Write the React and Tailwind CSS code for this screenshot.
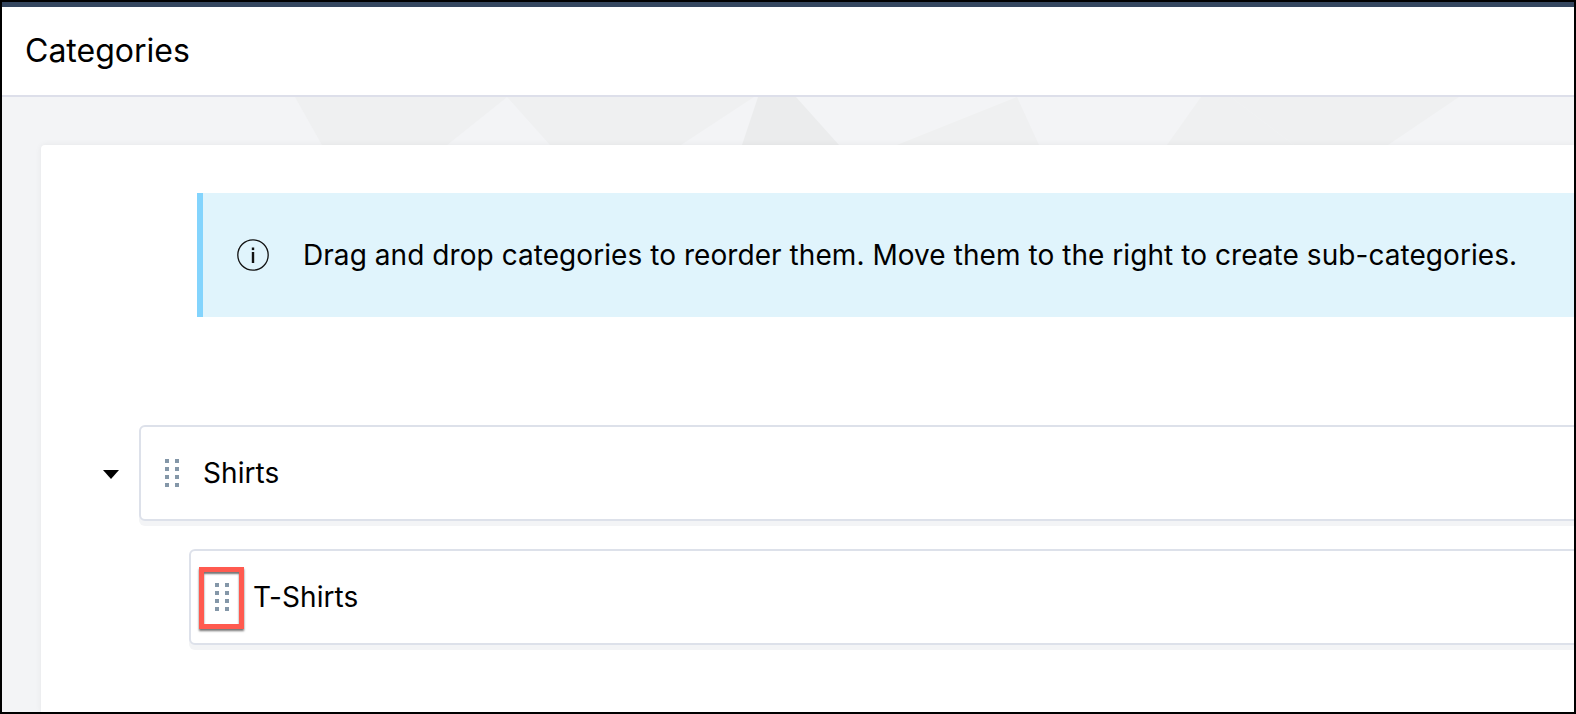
const darkShapes = [
  '293,0 320,48 445,48 505,0',
  '505,0 548,48 679,48 752,0',
  '1015,0 895,48 1037,48',
  '1199,0 1165,48 1292,48 1229,0',
  '1229,0 1292,48 1386,48 1457,0',
];

function Backdrop() {
  return (
    <svg className="absolute left-0 top-0 h-[48px] w-full" viewBox="0 0 1572 48" preserveAspectRatio="none">
      {darkShapes.map(points => <polygon key={points} points={points} fill="#eff0f1" />)}
      <polygon points="756,0 794,0 837,48 740,48" fill="#ebeced" />
    </svg>
  );
}

function InfoIcon() {
  return (
    <svg width="32" height="32" viewBox="0 0 32 32" fill="none" className="shrink-0">
      <circle cx="16" cy="16" r="15.2" stroke="#111" strokeWidth="1.3" />
      <rect x="14.8" y="8.5" width="2.4" height="2.6" fill="#111" />
      <rect x="14.8" y="13" width="2.4" height="11" fill="#111" />
    </svg>
  );
}

function DragHandle({ className }) {
  return (
    <svg className={className} width="14" height="28" viewBox="0 0 14 28" fill="#8497a8">
      {[0, 8, 16, 24].map(y => (
        <g key={y}>
          <rect x="0" y={y} width="4" height="4" />
          <rect x="10" y={y} width="4" height="4" />
        </g>
      ))}
    </svg>
  );
}

function CategoryRow({ label, children, className }) {
  return (
    <div className={`relative -mr-[8px] flex h-[96px] flex-1 items-center rounded-md border-2 border-[#dde1ea] bg-white shadow-[0_5px_0_#f3f4f6] ${className}`}>
      {children}
      <span className="text-[28px] tracking-[0.06px] text-black">{label}</span>
    </div>
  );
}

export default function App() {
  return (
    <div className="flex h-[714px] w-[1576px] flex-col overflow-hidden border-2 border-black bg-[#f3f4f6] font-['Inter',sans-serif]">
      <div className="h-[5px] bg-[#34465f]" />

      {/* Header */}
      <header className="flex h-[90px] items-center border-b-2 border-[#dddfea] bg-white pl-[23px]">
        <h1 className="text-[32px] font-normal text-black">Categories</h1>
      </header>

      {/* Content */}
      <main className="relative flex-1 pl-[39px] pt-[48px]">
        <Backdrop />
        <section className="relative h-full overflow-hidden rounded-tl-[4px] bg-white pt-[48px] shadow-[0_0_6px_rgba(0,0,0,0.06)]">
          <div className="ml-[156px] flex h-[124px] items-center border-l-[6px] border-[#83d4fd] bg-[#e0f4fc] pl-[34px]">
            <InfoIcon />
            <p className="ml-[34px] text-[28px] tracking-[0.06px] whitespace-nowrap text-black">
              Drag and drop categories to reorder them. Move them to the right to create sub-categories.
            </p>
          </div>

          <div className="mt-[108px] flex items-center pl-[62px]">
            <svg className="mr-[20px] mt-[2px]" width="16" height="9" viewBox="0 0 16 9" fill="#000">
              <path d="M0 0h16L8 9z" />
            </svg>
            <CategoryRow label="Shirts" className="pl-[24px]">
              <DragHandle className="mr-[24px]" />
            </CategoryRow>
          </div>

          <div className="mt-[28px] flex pl-[148px]">
            <CategoryRow label="T-Shirts" className="pl-[24px]">
              <DragHandle className="mr-[24px]" />
              <div className="absolute left-[8px] top-[16px] h-[62px] w-[45px] border-[5px] border-[#ff5a4f] shadow-[0_2px_2px_rgba(0,0,0,0.55),inset_0_2px_2px_rgba(0,0,0,0.55)]" />
            </CategoryRow>
          </div>
        </section>
      </main>
    </div>
  );
}
